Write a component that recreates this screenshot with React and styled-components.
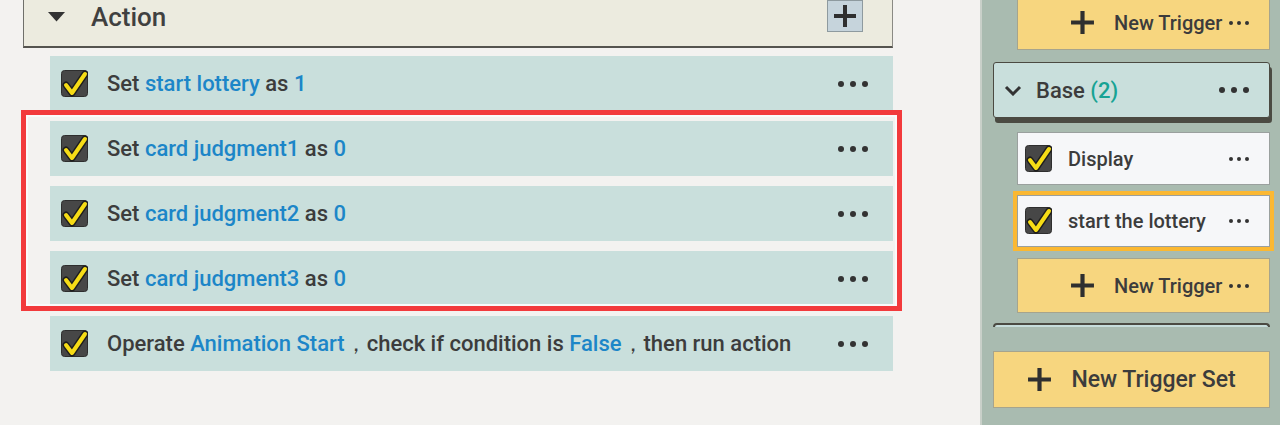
import React from 'react'
import styled, { createGlobalStyle } from 'styled-components'

const Ink = '#3c3c3c'
const Blue = '#1c86c8'
const RowBg = '#c9dfdc'
const Yellow = '#f7d67f'

const Global = createGlobalStyle`
body{margin:0;background:#f3f2f0;font-family:Roboto,"Liberation Sans",sans-serif;overflow:hidden;}
`

const Page = styled.div`
display:flex;
height:425px;
overflow:hidden;
`
const Left = styled.div`
position:relative;
flex:0 0 980px;
padding-left:23px;
box-sizing:border-box;
`
const Header = styled.div`
margin-top:-12px;
width:870px;
height:60px;
box-sizing:border-box;
background:#ecebdf;
border-left:1px solid #6f6f6a;
border-right:1px solid #8a8a84;
border-bottom:2px solid #55544f;
display:flex;
align-items:center;
padding:0 29px 0 24px;
`
const HeaderTitle = styled.div`
margin-left:26px;
font-size:26px;
font-weight:500;
color:#404040;
flex:1;
`
const PlusBox = styled.div`
width:36px;
height:32px;
box-sizing:border-box;
margin-top:-2px;
background:#c6d4dc;
border:1px solid #8e9a9f;
display:flex;
align-items:center;
justify-content:center;
`
const Rows = styled.div`
margin:8px 0 0 27px;
width:843px;
display:flex;
flex-direction:column;
gap:10px;
`
const Row = styled.div`
height:55px;
background:${RowBg};
display:flex;
align-items:center;
padding:0 25px 0 11px;
font-size:22px;
font-weight:500;
color:${Ink};
`
const RowText = styled.div`
flex:1;
margin-left:19px;
white-space:pre;
`
const Hi = styled.span`
color:${props => props.teal ? '#17a394' : Blue};
`
const Dots = styled.div`
display:flex;
gap:${props => props.small ? 4 : 6}px;
span{
  width:${props => props.small ? 4 : 6}px;
  height:${props => props.small ? 4 : 6}px;
  border-radius:50%;
  background:#333;
}
`
const Marker = styled.div`
position:absolute;
left:21px;
top:110px;
width:881px;
height:201px;
box-sizing:border-box;
border:5px solid #f23a3c;
box-shadow:inset 0 0 0 2px #fafafa;
pointer-events:none;
`

const Right = styled.div`
flex:1;
background:#a9bbb0;
border-left:2px solid #c9d0c9;
padding:0 10px 0 11px;
display:flex;
flex-direction:column;
`
const Button = styled.div`
height:${props => props.big ? 57 : 55}px;
box-sizing:border-box;
margin:${props => props.m};
background:${Yellow};
border:1px solid #a6a48d;
display:flex;
align-items:center;
justify-content:${props => props.big ? 'center' : 'flex-start'};
padding-left:${props => props.big ? 0 : 52}px;
gap:19px;
font-size:${props => props.big ? 23 : 20}px;
font-weight:500;
color:${Ink};
`
const BtnLabel = styled.span`
display:flex;
align-items:center;
gap:7px;
`
const GroupHead = styled.div`
margin-top:12px;
height:56px;
box-sizing:border-box;
background:${RowBg};
border:1px solid #4b4a42;
border-radius:3px;
box-shadow:2px 5px 0 #4b4a42;
display:flex;
align-items:center;
padding:0 20px 0 10px;
font-size:22px;
font-weight:500;
color:${Ink};
`
const GroupTitle = styled.div`
flex:1;
margin-left:14px;
`
const Items = styled.div`
margin:14px 0 0 24px;
display:flex;
flex-direction:column;
gap:10px;
`
const Item = styled.div`
height:${props => props.active ? 52 : 53}px;
box-sizing:border-box;
margin-bottom:${props => props.active ? 1 : 0}px;
background:#f6f7f9;
border:1px solid #9aa09e;
outline:${props => props.active ? '4px solid #fbb832' : 'none'};
display:flex;
align-items:center;
padding:0 20px 0 7px;
font-size:20px;
font-weight:500;
color:${Ink};
`
const ItemText = styled.div`
flex:1;
margin-left:16px;
`
const GroupStub = styled.div`
margin-top:10px;
height:4px;
box-sizing:border-box;
border:2px solid #4b4a42;
border-bottom:none;
border-radius:4px 4px 0 0;
background:#c7dddc;
`

const Check = () => (
  <svg width="27" height="28" viewBox="0 0 27 28" style={{ flex: 'none' }}>
    <rect x="0.5" y="0.5" width="26" height="26" rx="3" fill="#474747" stroke="#2e2e2e" />
    <path d="M5 15 L11 23 L24 4" fill="none" stroke="#1e1e1e" strokeWidth="7" strokeLinejoin="round" strokeLinecap="round" />
    <path d="M5 15 L11 23 L24 4" fill="none" stroke="#f6dc16" strokeWidth="4" strokeLinejoin="round" strokeLinecap="round" />
  </svg>
)

const Plus = ({ size = 25 }) => (
  <svg width={size} height={size} viewBox="0 0 24 24" style={{ flex: 'none' }}>
    <path d="M12 1 V23 M1 12 H23" stroke="#2f2f2f" strokeWidth="4" />
  </svg>
)

const Three = ({ small }) => (
  <Dots small={small}><span /><span /><span /></Dots>
)

const rows = [
  ['Set ', ['start lottery'], ' as ', ['1']],
  ['Set ', ['card judgment1'], ' as ', ['0']],
  ['Set ', ['card judgment2'], ' as ', ['0']],
  ['Set ', ['card judgment3'], ' as ', ['0']],
  ['Operate ', ['Animation Start'], '，check if condition is ', ['False'], '，then run action'],
]

export default function App() {
  return (
    <Page>
      <Global />
      <Left>
        <Header>
          <svg width="17" height="10" viewBox="0 0 17 10"><path d="M0 0 H17 L8.5 9.5 Z" fill="#333" /></svg>
          <HeaderTitle>Action</HeaderTitle>
          <PlusBox><Plus size={24} /></PlusBox>
        </Header>
        <Rows>
          {rows.map((r, i) => (
            <Row key={i}>
              <Check />
              <RowText>
                {r.map((p, j) => Array.isArray(p) ? <Hi key={j}>{p[0]}</Hi> : <span key={j}>{p}</span>)}
              </RowText>
              <Three />
            </Row>
          ))}
        </Rows>
        <Marker />
      </Left>
      <Right>
        <Button m="-5px 0 0 24px">
          <Plus />
          <BtnLabel>New Trigger <Three small /></BtnLabel>
        </Button>
        <GroupHead>
          <svg width="18" height="11" viewBox="0 0 18 11"><path d="M2 2 L9 9 L16 2" fill="none" stroke="#333" strokeWidth="3" /></svg>
          <GroupTitle>Base <Hi teal>(2)</Hi></GroupTitle>
          <Three />
        </GroupHead>
        <Items>
          <Item>
            <Check />
            <ItemText>Display</ItemText>
            <Three small />
          </Item>
          <Item active>
            <Check />
            <ItemText>start the lottery</ItemText>
            <Three small />
          </Item>
          <Button m="0">
            <Plus />
            <BtnLabel>New Trigger <Three small /></BtnLabel>
          </Button>
        </Items>
        <GroupStub />
        <Button big m="24px 0 0 0">
          <Plus />
          <span>New Trigger Set</span>
        </Button>
      </Right>
    </Page>
  )
}
